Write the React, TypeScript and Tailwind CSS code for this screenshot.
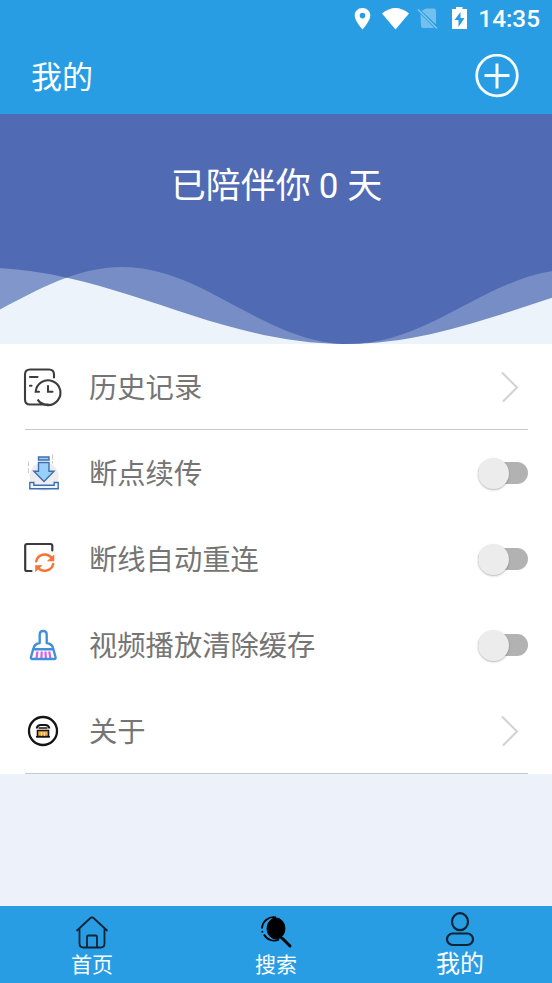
import { useState } from "react";
import type { ReactNode } from "react";

const HistoryIcon = () => (
  <svg width="44" height="41" viewBox="0 0 44 41" fill="none" stroke="#3d3d3f" strokeWidth="2.100" strokeLinecap="round">
    <path d="M34 11.500V8.500q0-5-5-5H10Q5 3.500 5 8.500v25q0 5 5 5h18" />
    <path d="M10 11h7.500M10 19.800h1.500" />
    <path d="M19 25.800h-3.300a12.400 12.400 0 1 1 2 7.700q1.500 3.500 7 5" />
    <path d="M28 20v5.800h4.500" />
  </svg>
);

const DownloadIcon = () => (
  <svg width="44" height="41" viewBox="0 0 44 41" fill="none">
    <circle cx="24" cy="24.500" r="14.500" fill="#ededf1" />
    <path d="M8.500 9.500v12M32.500 2.500v9" stroke="#cbcbd0" strokeDasharray="5 1.500" />
    <path
      d="M18.500 5h10.500v3H18.500zM18.500 10.500h10.500v8.700h5L24 29.500 13.800 19.200h4.700z"
      fill="#98cffb"
      stroke="#3f6fab"
      strokeWidth="1.400"
    />
    <path d="M9.800 30.500h4v2.800h20.400v-2.800h4v6.300H9.800z" fill="#edf5ff" stroke="#3f6fab" strokeWidth="1.400" />
  </svg>
);

const ReconnectIcon = () => (
  <svg width="44" height="41" viewBox="0 0 44 41" fill="none">
    <path
      d="M11.500 33H7q-1.800 0-1.800-1.800V7.800Q5.200 6 7 6h23.500q1.800 0 1.800 1.800v4.700"
      stroke="#3a3a3e"
      strokeWidth="2.200"
      strokeLinecap="round"
    />
    <path
      d="M16.200 23.300a8.800 8.800 0 0 1 15.200-3.800M33.200 26a8.800 8.800 0 0 1-15.200 3.800"
      stroke="#f4753a"
      strokeWidth="2.500"
      strokeLinecap="round"
    />
    <path d="M34 17v6h-6.500zM15.500 33.500v-6H22z" fill="#f4753a" stroke="#f4753a" strokeWidth=".6" strokeLinejoin="round" />
  </svg>
);

const BroomIcon = () => (
  <svg width="44" height="41" viewBox="0 0 44 41" fill="none" strokeLinejoin="round">
    <path d="M17.500 27.500l-1 6.500M21.700 27.500l-.3 6.500M25.500 27.500l.3 6.500M29.200 27.500l1.200 6.500" stroke="#d45cea" strokeWidth="2.200" />
    <path
      d="M19.700 19v-8.500q0-3.500 3.500-3.500t3.500 3.500V19q5.500 1 6.300 5l2.500 9q.5 2-1.500 2H12.500q-2 0-1.500-2l2.500-9q1-4 6.200-5zM13.300 25.300h20"
      stroke="#418fdb"
      strokeWidth="2.400"
    />
  </svg>
);

const AboutIcon = () => (
  <svg width="44" height="41" viewBox="0 0 44 41" fill="none" stroke="#151515">
    <circle cx="23" cy="21" r="14" fill="#fff" strokeWidth="2.300" />
    <path d="M16.500 18.500q1-3.500 4-3.500h5q3 0 4 3.500" strokeWidth="1.800" />
    <path d="M18.500 18h9" strokeWidth="1.500" />
    <rect x="17.500" y="20.500" width="11" height="6" fill="#f9ae3f" strokeWidth="1.600" />
    <path d="M21.500 22v4M24.500 22v4" stroke="#fff" strokeWidth=".6" />
    <path d="M16 26.800h14" strokeWidth="1.600" />
  </svg>
);

const Chevron = () => (
  <svg width="20" height="33" viewBox="0 0 20 33" fill="none" stroke="#d2d2d2" strokeWidth="2" className="mr-[8px]">
    <path d="M2 2.500L17 17.500 3 31.500" />
  </svg>
);

const Toggle = () => {
  const [on, setOn] = useState(false);

  return (
    <button
      role="switch"
      aria-checked={on}
      onClick={() => setOn(!on)}
      className={`mt-px flex h-[22px] w-[50px] items-center rounded-full ${
        on ? "justify-end bg-[#289de3]" : "bg-[#b2b2b2]"
      }`}
    >
      <span className="h-[31px] w-[31px] shrink-0 rounded-full bg-[#ececec] shadow-[0_1px_2px_rgba(0,0,0,0.28)]" />
    </button>
  );
};

interface RowProps {
  icon: ReactNode;
  label: string;
  toggle?: boolean;
}

const Row = ({ icon, label, toggle }: RowProps) => (
  <div
    className={`mr-6 ml-[25px] flex h-[86px] items-center border-b ${
      toggle ? "border-transparent" : "border-[#c9c9c9]"
    }`}
  >
    <span className="-ml-[5px] w-[69px]">{icon}</span>
    <span className="flex-1 text-[28.3px] leading-none text-[#757575]">{label}</span>
    {toggle ? <Toggle /> : <Chevron />}
  </div>
);

const waveA = "M-20 0V153.500C113 153.500 212 230 345 230S577 153.500 710 153.500V0z";
const waveB = "M-107 0V230C-24 230 39 153 122 153S264 230 349 230 491 155 576 155V0z";

const Hero = () => (
  <section className="grid h-[230px] bg-[#edf3fa]">
    <svg width="552" height="230" viewBox="0 0 552 230" className="col-start-1 row-start-1">
      <clipPath id="wave">
        <path d={waveA} />
      </clipPath>
      <path d={waveB} fill="#8197cb" />
      <path d={waveA} fill="#768dc5" />
      <path d={waveB} fill="#506bb4" clipPath="url(#wave)" />
    </svg>
    <p className="z-10 col-start-1 row-start-1 pt-[51px] pl-px text-center text-[35px] leading-[36px] text-white">
      已陪伴你 <span className="mr-px font-[Roboto]">0</span> 天
    </p>
  </section>
);

const StatusBar = () => (
  <div className="flex h-[38px] items-center justify-end pr-3 text-white">
    <svg width="122" height="24" viewBox="350 7 122 24" fill="#fff">
      <path
        fillRule="evenodd"
        d="M363.500 8c-4.500 0-7.800 3.200-7.800 7.500 0 5.500 7.800 14 7.800 14s7.800-8.500 7.800-14c0-4.300-3.300-7.500-7.800-7.500zm0 4.800a2.800 2.800 0 1 1 0 5.600 2.800 2.800 0 0 1 0-5.600z"
      />
      <path d="M383 13.500q13.500-11 27 0L396.500 29.500z" />
      <path d="M427 8.500h8q2 0 2 2v14L422.500 10.800zM421.500 14l14 14H424q-2 0-2-2z" opacity=".35" />
      <path d="M419 9.500l19 19" stroke="#fff" strokeWidth="1.600" opacity=".4" />
      <path d="M457 7h6.500v2h4.500v20h-15V9h4z" />
      <path d="M461.500 12v6h4l-6 9v-7h-4z" fill="#289de3" />
    </svg>
    <span className="ml-[7px] pt-px font-[Roboto] text-[24.3px] leading-none font-medium">14:35</span>
  </div>
);

const Header = () => (
  <header className="h-[114px] bg-[#289de3] text-white">
    <StatusBar />
    <div className="flex h-[75px] items-center justify-between pr-[33px] pl-[31px]">
      <h1 className="pb-[3px] text-[31px] leading-none">我的</h1>
      <svg width="44" height="44" viewBox="0 0 44 44" fill="none" stroke="#f4fbff" strokeWidth="3">
        <circle cx="22" cy="21.500" r="20.300" strokeWidth="2.800" />
        <path d="M22 9.500v25M9.500 21.500h25" />
      </svg>
    </div>
  </header>
);

const TabBar = () => (
  <nav className="grid h-[77px] grid-cols-3 bg-[#289de3] text-white">
    <a className="flex flex-col items-center pt-[9px]">
      <svg
        width="34"
        height="34"
        viewBox="0 0 34 34"
        fill="none"
        stroke="#0c2433"
        strokeWidth="1.800"
        strokeLinejoin="round"
        strokeLinecap="round"
      >
        <path d="M2 15.500L15.500 3q1.500-1.300 3 0L32 15.500M4.500 14v14.500q0 4 4 4h17q4 0 4-4V14" />
        <path d="M12 32V22q0-1.500 1.500-1.500h7q1.500 0 1.500 1.500v10" />
      </svg>
      <span className="mt-[2px] text-[21px] leading-[24px]">首页</span>
    </a>
    <a className="flex flex-col items-center pt-[9px]">
      <svg width="34" height="34" viewBox="0 0 34 34" fill="none" stroke="#050505">
        <ellipse cx="17" cy="13.500" rx="9" ry="10.500" fill="#000" />
        <path d="M20 24.500A11.500 11.500 0 0 1 5 19.500M3.500 17.500l-.3-1.500M3 13.500A11.500 11.500 0 0 1 17 2.500" strokeWidth="1.800" />
        <path d="M20 20.500l3 3" strokeWidth="2.500" />
        <path d="M23.500 23.500l7.500 7.500" strokeWidth="3" strokeLinecap="round" />
      </svg>
      <span className="mt-[2px] text-[21px] leading-[24px]">搜索</span>
    </a>
    <a className="flex flex-col items-center pt-[6px]">
      <svg width="34" height="36" viewBox="0 0 34 36" fill="none" stroke="#0c2433" strokeWidth="2.200">
        <ellipse cx="17" cy="9.700" rx="8" ry="8.500" />
        <rect x="4" y="21.500" width="26" height="11.500" rx="5.750" />
      </svg>
      <span className="mt-px text-[24px] leading-[26px]">我的</span>
    </a>
  </nav>
);

const App = () => (
  <div className="flex h-[983px] w-[552px] flex-col overflow-hidden bg-[#edf2fa] font-['Noto_Sans_CJK_SC',sans-serif]">
    <Header />
    <Hero />
    <main className="bg-white">
      <Row icon={<HistoryIcon />} label="历史记录" />
      <Row icon={<DownloadIcon />} label="断点续传" toggle />
      <Row icon={<ReconnectIcon />} label="断线自动重连" toggle />
      <Row icon={<BroomIcon />} label="视频播放清除缓存" toggle />
      <Row icon={<AboutIcon />} label="关于" />
    </main>
    <div className="flex-1" />
    <TabBar />
  </div>
);

export default App;
